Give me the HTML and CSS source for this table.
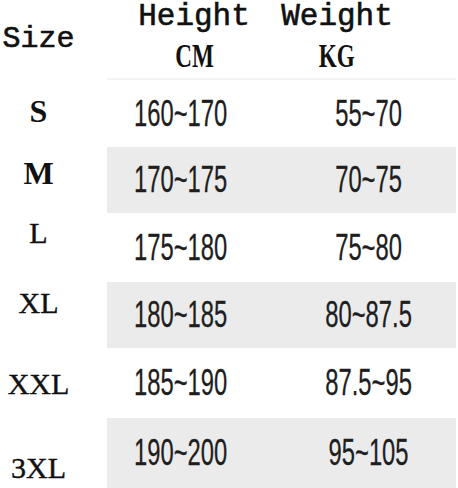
FILE: index.html
```html
<!DOCTYPE html>
<html>
<head>
<meta charset="utf-8">
<link rel="stylesheet" href="styles.css">
</head>
<body>
<div class="chart">
  <div class="head">
    <div class="size-h">Size</div>
    <div class="head-band">
      <div class="hcol hcol-height"><span class="h1">Height</span><span class="h2">CM</span></div>
      <div class="hcol hcol-weight"><span class="h1">Weight</span><span class="h2">KG</span></div>
    </div>
  </div>

  <div class="row r1">
    <div class="size"><span class="lbl bold sh-s">S</span></div>
    <div class="band"><span class="num">160~170</span><span class="num">55~70</span></div>
  </div>
  <div class="row r2">
    <div class="size"><span class="lbl bold sh-m">M</span></div>
    <div class="band shaded"><span class="num">170~175</span><span class="num">70~75</span></div>
  </div>
  <div class="row r3">
    <div class="size"><span class="lbl sh-l">L</span></div>
    <div class="band"><span class="num">175~180</span><span class="num">75~80</span></div>
  </div>
  <div class="row r4">
    <div class="size"><span class="lbl sh-xl">XL</span></div>
    <div class="band shaded"><span class="num">180~185</span><span class="num">80~87.5</span></div>
  </div>
  <div class="row r5">
    <div class="size"><span class="lbl sh-xxl">XXL</span></div>
    <div class="band"><span class="num">185~190</span><span class="num">87.5~95</span></div>
  </div>
  <div class="row r6">
    <div class="size"><span class="lbl sh-3xl">3XL</span></div>
    <div class="band shaded"><span class="num">190~200</span><span class="num">95~105</span></div>
  </div>
</div>
</body>
</html>
```

FILE: styles.css
```css
html, body {
  margin: 0;
  padding: 0;
  background: #ffffff;
}

.chart {
  width: 458px;
  height: 488px;
  overflow: hidden;
  color: #111;
}

/* header */
.head {
  display: flex;
  height: 80px;
}

.size-h {
  width: 77px;
  text-align: center;
  font-family: "Liberation Mono", monospace;
  font-size: 30px;
  line-height: 34px;
  margin-top: 22px;
  -webkit-text-stroke: 0.6px #111;
}

.head-band {
  margin-left: 30px;
  width: 349px;
  height: 80px;
  box-sizing: border-box;
  border-bottom: 2px solid #f2f2f2;
  display: grid;
  grid-template-columns: 174px 112px;
}

.hcol {
  display: flex;
  flex-direction: column;
  align-items: center;
}

.h1 {
  font-family: "Liberation Mono", monospace;
  font-size: 31px;
  line-height: 34px;
  -webkit-text-stroke: 0.6px #111;
  white-space: nowrap;
}

.h2 {
  font-family: "Liberation Serif", serif;
  font-weight: bold;
  font-size: 33px;
  line-height: 34px;
  margin-top: 5px;
  display: inline-block;
  transform: scaleX(0.7);
}

/* rows */
.row {
  display: flex;
  align-items: stretch;
}
.r1 { height: 67px; }
.r2 { height: 66px; }
.r3 { height: 69px; }
.r4 { height: 66px; }
.r5 { height: 70px; }
.r6 { height: 70px; }

.size {
  width: 77px;
  margin-right: 30px;
  display: flex;
  align-items: center;
  justify-content: center;
}

.lbl {
  font-family: "Liberation Serif", serif;
  font-size: 30px;
  line-height: 30px;
  color: #111;
  -webkit-text-stroke: 0.4px #111;
}
.bold {
  font-weight: bold;
  font-size: 32px;
  -webkit-text-stroke: 0;
}

.sh-s { padding-bottom: 5px; }
.sh-m { padding-bottom: 15px; }
.sh-l { padding-bottom: 29px; }
.sh-xl { padding-bottom: 24px; }
.sh-xxl { padding-top: 2px; }
.sh-3xl { padding-top: 30px; }

.band {
  width: 349px;
  display: grid;
  grid-template-columns: 148px 1fr;
  align-items: center;
}
.shaded {
  background: #ebebeb;
}

.num {
  font-family: "Liberation Sans", sans-serif;
  font-size: 36px;
  line-height: 36px;
  color: #1e1e1e;
  -webkit-text-stroke: 0.3px #1e1e1e;
  display: inline-block;
  transform: scaleX(0.66);
  text-align: center;
  justify-self: center;
  white-space: nowrap;
}
.num + .num {
  margin-left: 27px;
}
```
